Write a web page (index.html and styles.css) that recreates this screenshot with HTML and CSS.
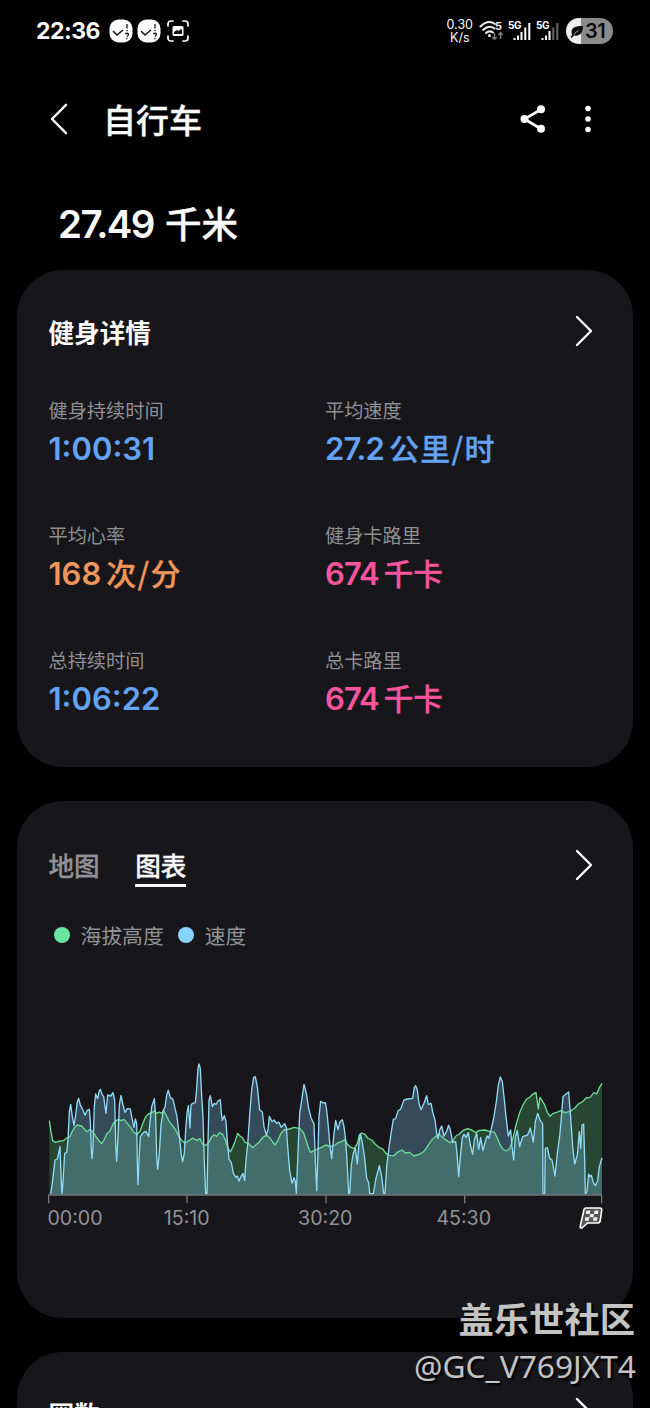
FILE: index.html
```
<!DOCTYPE html>
<html lang="zh-CN">
<head>
  <meta charset="UTF-8">
  <meta name="viewport" content="width=device-width, initial-scale=1.0">
  <title>自行车</title>
  <link rel="stylesheet" href="styles.css">
</head>
<body>
  <div class="status-bar">
    <span class="clock">22:36</span>
    <svg class="app-icon" viewBox="0 0 24 24">
      <rect x="0.5" y="0.5" width="23" height="23" rx="9" fill="#fff"/>
      <path d="M4 12l4 4 6-5" fill="none" stroke="#111" stroke-width="1.5"/>
      <path d="M18 5v4.500M18 11v1.200M16.300 15q1.800-1.500 3.200 0 .3 1.500-1.700 2.600M17.800 19v1.200" fill="none" stroke="#111" stroke-width="1.300"/>
    </svg>
    <svg class="app-icon" viewBox="0 0 24 24">
      <rect x="0.5" y="0.5" width="23" height="23" rx="9" fill="#fff"/>
      <path d="M4 12l4 4 6-5" fill="none" stroke="#111" stroke-width="1.5"/>
      <path d="M18 5v4.500M18 11v1.200M16.300 15q1.800-1.500 3.200 0 .3 1.500-1.700 2.600M17.800 19v1.200" fill="none" stroke="#111" stroke-width="1.300"/>
    </svg>
    <svg class="shot-icon" viewBox="0 0 22 22">
      <path d="M1 6V4q0-3 3-3h2M16 1h2q3 0 3 3v2M21 16v2q0 3-3 3h-2M6 21H4q-3 0-3-3v-2" fill="none" stroke="#fff" stroke-width="1.700" stroke-linecap="round"/>
      <rect x="5.500" y="6" width="11" height="10" rx="1.500" fill="#fff"/>
      <path d="M7 14v-2l3-2 1.500 1L14 9l1 1v4z" fill="#111"/>
    </svg>
    <div class="status-right">
      <span class="net-speed">0.30<br>K/s</span>
      <svg class="wifi" viewBox="0 0 26 22">
        <g fill="none" stroke="#eee" stroke-width="2.100" stroke-linecap="round">
          <path d="M1.500 6.500Q9-1 16 4"/>
          <path d="M4.200 9.800Q10 4.500 15.500 8.500"/>
          <path d="M7 13Q10.500 10 14 12.500"/>
        </g>
        <circle cx="10.500" cy="15.500" r="1.500" fill="#eee"/>
        <path d="M15.500 13v6M13.300 17l2.200 2.300 2.200-2.300M21.500 19v-6M19.300 15l2.200-2.300 2.200 2.300" fill="none" stroke="#777" stroke-width="1.600"/>
        <text x="16" y="9.500" class="wifi-num">5</text>
      </svg>
      <svg class="signal" viewBox="0 0 24 22">
        <text x="0" y="8.500" class="sig-text">5G</text>
        <path d="M6.500 18v2M10 15.500V20M13.500 12V20M17.300 7.500V20M21.300 3V20" stroke="#fff" stroke-width="2" fill="none"/>
      </svg>
      <svg class="signal" viewBox="0 0 24 22">
        <text x="0" y="8.500" class="sig-text">5G</text>
        <path d="M6.500 18v2M10 15.500V20M13.500 11V20" stroke="#fff" stroke-width="2" fill="none"/>
        <path d="M17.300 7.500V20M21.300 3V20" stroke="#666" stroke-width="2" fill="none"/>
      </svg>
      <div class="battery">
        <svg viewBox="0 0 14 14">
          <path d="M2 11Q0 5 5 3 8 1.800 13 2q0 5-2.500 8-3 2.600-6.500 1.500L1.500 14 .5 13z" fill="#0a0a0a"/>
          <path d="M3.500 10.800l5-4.800" stroke="#bbb" stroke-width="0.900"/>
        </svg>
        <span>31</span>
      </div>
    </div>
  </div>

  <header class="app-bar">
    <svg class="back" viewBox="0 0 18 32">
      <path d="M16 1.800L2 16l14 14.200" fill="none" stroke="#fff" stroke-width="2.400" stroke-linecap="round" stroke-linejoin="round"/>
    </svg>
    <h1>自行车</h1>
    <svg class="share" viewBox="0 0 26 30">
      <path d="M21 5.500L4.500 15 21 25" fill="none" stroke="#fff" stroke-width="2.700"/>
      <circle cx="4.500" cy="15" r="4" fill="#fff"/>
      <circle cx="21" cy="5.200" r="4" fill="#fff"/>
      <circle cx="21" cy="24.800" r="4" fill="#fff"/>
    </svg>
    <svg class="more" viewBox="0 0 8 30">
      <circle cx="4" cy="4.500" r="2.800" fill="#fff"/>
      <circle cx="4" cy="15" r="2.800" fill="#fff"/>
      <circle cx="4" cy="25.500" r="2.800" fill="#fff"/>
    </svg>
  </header>

  <div class="distance">27.49 <span>千米</span></div>

  <section class="card details">
    <div class="card-head">
      <h2>健身详情</h2>
      <svg class="chevron" viewBox="0 0 18 32">
        <path d="M2 2l14 14L2 30" fill="none" stroke="#fff" stroke-width="2.400" stroke-linecap="round" stroke-linejoin="round"/>
      </svg>
    </div>
    <div class="stats">
      <div class="stat blue">
        <p>健身持续时间</p>
        <strong>1:00:31</strong>
      </div>
      <div class="stat blue tight">
        <p>平均速度</p>
        <strong>27.2<span class="wide">公里/时</span></strong>
      </div>
      <div class="stat orange">
        <p>平均心率</p>
        <strong>168<span class="wide">次/分</span></strong>
      </div>
      <div class="stat pink tight">
        <p>健身卡路里</p>
        <strong>674<span>千卡</span></strong>
      </div>
      <div class="stat blue">
        <p>总持续时间</p>
        <strong>1:06:22</strong>
      </div>
      <div class="stat pink tight">
        <p>总卡路里</p>
        <strong>674<span>千卡</span></strong>
      </div>
    </div>
  </section>

  <section class="card chart-card">
    <div class="card-head">
      <div class="tabs">
        <span class="tab">地图</span>
        <span class="tab active">图表</span>
      </div>
      <svg class="chevron" viewBox="0 0 18 32">
        <path d="M2 2l14 14L2 30" fill="none" stroke="#fff" stroke-width="2.400" stroke-linecap="round" stroke-linejoin="round"/>
      </svg>
    </div>
    <div class="legend">
      <i class="dot green"></i><span>海拔高度</span>
      <i class="dot sky"></i><span>速度</span>
    </div>
    <svg class="chart" viewBox="0 0 1668 435">
      <path id="altArea" class="alt-area"/>
      <path id="speedArea" class="speed-area"/>
      <polyline id="altLine" class="alt-line"/>
      <polyline id="speedLine" class="speed-line"/>
      <path class="axis" d="M0 405H1662M2 405v25M417 405v25M834 405v25M1250 405v25M1661 405v25"/>
    </svg>
    <div class="axis-labels">
      <span>00:00</span>
      <span>15:10</span>
      <span>30:20</span>
      <span>45:30</span>
      <svg class="flag" viewBox="0 0 24 22">
        <path d="M5 2.500Q5.500 1 7 1h14q2 0 1.700 2l-1.500 11q-.4 2-2.400 2H8.500L3.500 20.500q-2.500 1.500-2.300-1z" fill="#555" stroke="#fff" stroke-width="1.600" stroke-linejoin="round"/>
        <path d="M7.300 3.500h4l-.5 3.400h-4zM15.500 3.500h4l-.5 3.400h-4zM11 6.900h4l-.5 3.400h-4zM6.300 10.300h4l-.5 3.400h-4zM14.500 10.300h4l-.5 3.400h-4z" fill="#eee"/>
      </svg>
    </div>
  </section>

  <section class="card laps">
    <div class="card-head">
      <h2>圈数</h2>
      <svg class="chevron" viewBox="0 0 18 32">
        <path d="M2 2l14 14L2 30" fill="none" stroke="#fff" stroke-width="2.400" stroke-linecap="round" stroke-linejoin="round"/>
      </svg>
    </div>
  </section>

  <div class="watermark">
    <b>盖乐世社区</b>
    <span>@GC_V769JXT4</span>
  </div>

  <script>
    const altitude = `4,182 9,215 14,242 23,247 36,243 46,242 56,234 66,230 72,216 80,202 88,195 101,198 109,207
      116,215 124,209 132,213 140,224 151,240 161,251 168,240 176,222 186,213 194,194 202,183 211,178 219,182
      228,178 238,190 248,202 256,216 267,223 276,214 284,192 292,172 301,162 312,158 319,152 326,160 334,156
      341,160 347,151 354,165 364,185 374,198 382,208 391,226 401,242 411,249 423,242 434,234 446,241 456,236
      464,253 474,256 484,245 489,234 498,224 506,229 514,218 524,223 532,240 539,262 547,276 554,262 561,245
      569,220 576,228 584,234 591,247 601,250 614,263 624,254 634,246 644,232 656,226 666,234 674,246 682,255
      691,238 699,220 708,210 724,207 739,202 756,206 766,217 774,240 781,263 788,277 798,272 808,267 821,262
      833,255 848,260 861,255 871,248 881,245 891,238 898,253 908,262 919,266 928,250 934,225 941,219 951,223
      959,234 971,240 981,252 993,262 1004,267 1014,280 1024,286 1038,287 1048,277 1061,270 1073,279 1084,277
      1098,288 1113,283 1126,276 1136,263 1144,250 1153,238 1164,229 1173,222 1182,231 1191,238 1206,248
      1216,241 1224,228 1234,222 1244,212 1258,206 1271,210 1283,218 1294,211 1311,210 1326,215 1339,216
      1348,234 1356,254 1364,267 1374,273 1384,267 1391,250 1398,220 1406,188 1416,155 1426,133 1436,117
      1446,111 1454,103 1464,97 1471,147 1476,112 1483,123 1489,133 1498,157 1506,169 1516,160 1526,157
      1538,152 1551,158 1566,154 1581,144 1591,132 1604,125 1614,114 1626,112 1638,98 1646,102 1654,83 1662,70`;

    const speed = `8,402 13,370 21,300 28,297 32,280 36,260 40,370 42,402 45,365 50,280 56,278 60,240 64,155 68,133
      73,170 78,196 83,165 88,125 92,115 97,135 104,148 111,166 117,152 124,148 127,185 130,270 132,296 135,260
      139,140 143,102 149,116 153,95 157,88 162,103 167,110 174,160 179,105 188,108 195,98 200,120 203,250
      206,304 210,230 214,135 219,106 225,135 231,157 238,146 247,147 252,175 258,203 262,177 266,190 268,310
      270,374 273,300 277,230 286,218 294,214 302,230 306,185 311,140 319,116 323,170 326,290 329,328 334,280
      339,195 346,150 351,142 356,105 361,91 367,113 375,118 381,145 387,170 394,230 400,285 404,305 409,280
      413,210 417,160 421,137 426,204 429,135 434,130 442,128 445,100 450,25 453,12 457,25 460,90 465,170
      469,310 473,401 477,401 480,250 483,120 487,107 493,140 499,130 504,133 510,123 517,119 520,160 523,181
      529,167 534,185 538,245 543,298 550,308 556,340 564,352 568,348 573,363 579,350 585,340 590,362 594,300
      599,255 605,165 611,90 617,52 622,50 628,80 635,150 643,156 648,200 655,225 660,210 664,169 672,185
      678,180 686,190 692,186 700,202 710,191 715,203 719,260 725,332 732,370 738,353 742,365 745,401 749,300
      755,160 762,115 768,73 775,100 782,145 789,173 798,192 802,300 806,392 809,310 813,170 818,124 826,129
      832,128 836,150 841,200 846,260 851,296 857,230 863,181 870,209 876,185 883,179 888,200 893,240 898,320
      902,401 905,401 910,315 916,280 922,265 928,312 933,250 937,222 943,248 950,295 956,355 962,368 965,401
      976,401 984,355 994,317 1001,350 1007,401 1011,401 1016,320 1022,270 1030,215 1036,178 1043,176 1050,153
      1058,147 1068,120 1079,117 1094,115 1099,83 1103,77 1108,90 1113,130 1119,149 1128,130 1136,107 1141,133
      1149,130 1155,160 1161,180 1166,220 1170,236 1175,210 1181,198 1188,228 1196,214 1202,196 1207,210
      1214,247 1223,245 1227,280 1232,350 1237,290 1243,232 1248,223 1254,232 1261,218 1267,255 1274,283
      1279,240 1286,220 1292,268 1298,233 1305,272 1311,248 1317,228 1323,234 1329,210 1338,170 1345,125
      1351,75 1357,51 1363,65 1369,120 1374,170 1381,228 1388,210 1392,260 1397,300 1402,230 1408,211 1415,260
      1424,230 1439,225 1447,204 1456,246 1462,185 1469,160 1476,180 1484,192 1485,401 1490,401 1492,265
      1498,263 1505,295 1512,300 1521,348 1528,280 1536,220 1541,160 1545,110 1554,102 1562,96 1567,160
      1574,260 1580,312 1588,285 1594,215 1598,265 1602,195 1607,192 1610,300 1612,401 1617,395 1622,342
      1626,350 1630,346 1636,368 1642,377 1649,362 1654,320 1662,294`;

    // area goes down to the axis, line is only the top edge
    function draw(name, points, startX) {
      document.getElementById(name + 'Line').setAttribute('points', points);
      document.getElementById(name + 'Area').setAttribute('d', `M${startX},404 L${points} L1662,404 Z`);
    }
    draw('alt', altitude, 4);
    draw('speed', speed, 8);
  </script>
</body>
</html>
```

FILE: styles.css
```
* {
  box-sizing: border-box;
}
body {
  font-family: Inter, 'Noto Sans CJK SC', sans-serif;
  background-color: #000;
  color: #fafafa;
  margin: 0;
  padding: 0 17px;
  height: 1408px;
  overflow: hidden;
  position: relative;
}
h1, h2, p {
  margin: 0;
}
svg {
  display: block;
  flex: none;
}
.status-bar {
  display: flex;
  align-items: center;
  height: 62px;
  padding: 0 20px 0 19px;
}
.clock {
  font-size: 23px;
  font-weight: 700;
  letter-spacing: -0.5px;
  width: 73px;
  white-space: nowrap;
}
.app-icon {
  width: 24px;
  height: 24px;
  margin-right: 4px;
}
.shot-icon {
  width: 22px;
  height: 22px;
  margin-left: 2px;
}
.status-right {
  display: flex;
  align-items: center;
  margin-left: auto;
}
.net-speed {
  font-size: 12.5px;
  line-height: 13.5px;
  text-align: center;
  margin-right: 6px;
}
.wifi {
  width: 26px;
  height: 22px;
  margin-right: 3px;
}
.wifi-num {
  font-size: 11px;
  font-weight: 700;
  fill: #eee;
}
.signal {
  width: 24px;
  height: 22px;
  margin-right: 4px;
}
.signal + .battery {
  margin-left: 2px;
}
.sig-text {
  font-size: 10px;
  font-weight: 700;
  letter-spacing: -0.5px;
  fill: #fff;
}
.battery {
  display: flex;
  align-items: center;
  width: 47px;
  height: 26px;
  padding-left: 4px;
  border-radius: 13px;
  background: linear-gradient(to right, #eee 15px, #8b8b8b 15px);
  color: #0a0a0a;
  font-size: 20px;
  font-weight: 600;
  letter-spacing: -0.5px;
}
.battery svg {
  width: 14px;
  height: 14px;
  margin-right: 1px;
}
.app-bar {
  display: flex;
  align-items: center;
  height: 114px;
  padding: 0 41px 0 33px;
}
.back {
  width: 18px;
  height: 32px;
  margin-right: 35px;
}
.app-bar h1 {
  font-size: 33px;
  font-weight: 500;
  line-height: 40px;
  padding-top: 4px;
  flex: 1;
  -webkit-text-stroke: 0.4px;
}
.share {
  width: 26px;
  height: 30px;
  margin-right: 38px;
}
.more {
  width: 8px;
  height: 30px;
}
.distance {
  height: 94px;
  padding: 24px 0 0 41px;
  font-size: 38.5px;
  font-weight: 600;
  line-height: 48px;
  letter-spacing: -1.6px;
  white-space: nowrap;
}
.distance span {
  font-size: 36.5px;
  font-weight: 500;
  letter-spacing: 0;
  margin-left: 3px;
  -webkit-text-stroke: 0.4px;
}
.card {
  background-color: #17171b;
  border-radius: 46px;
  padding: 40px 40px 0 31.5px;
}
.card-head {
  display: flex;
  justify-content: space-between;
  height: 44px;
}
.card-head h2 {
  font-size: 25.6px;
  font-weight: 700;
  line-height: 44px;
  padding-top: 2px;
}
.chevron {
  width: 18px;
  height: 32px;
  margin-top: 5px;
}
.details {
  height: 497px;
}
.stats {
  display: grid;
  grid-template-columns: 276.5px 1fr;
  grid-auto-rows: 125px;
  margin-top: 43px;
}
.stat p {
  font-size: 19.2px;
  line-height: 28px;
  color: #8f8f93;
}
.stat strong {
  display: block;
  font-size: 31px;
  font-weight: 600;
  line-height: 47px;
  white-space: nowrap;
}
.stat strong span {
  font-family: 'Noto Sans CJK SC', sans-serif;
  font-size: 29.5px;
  font-weight: 500;
  line-height: 1;
  letter-spacing: 0;
  margin-left: 5px;
  -webkit-text-stroke: 0.3px;
}
.stat strong .wide {
  font-size: 30px;
  letter-spacing: 1.3px;
}
.tight strong {
  letter-spacing: -0.9px;
}
.blue strong {
  color: #64a2f4;
}
.orange strong {
  color: #f0965a;
}
.pink strong {
  color: #f8559d;
}
.chart-card {
  height: 517px;
  margin-top: 34px;
  padding-right: 30px;
}
.chart-card .chevron {
  margin-top: 8px;
  margin-right: 10px;
}
.tabs {
  display: flex;
  gap: 35.5px;
}
.tab {
  font-size: 25.6px;
  font-weight: 500;
  line-height: 40px;
  height: 46px;
  padding-top: 6px;
  color: #929296;
  -webkit-text-stroke: 0.3px;
}
.tab.active {
  color: #fafafa;
  border-bottom: 3px solid #fafafa;
}
.legend {
  display: flex;
  align-items: center;
  height: 30px;
  margin-top: 35px;
  padding-left: 5px;
  font-size: 20.8px;
  color: #929296;
}
.dot {
  width: 16px;
  height: 16px;
  border-radius: 50%;
  margin-right: 11px;
}
.green {
  background-color: #68e5a2;
}
.sky {
  background-color: #86d3fd;
  margin-left: 14px;
}
.chart {
  width: 556px;
  height: 145px;
  margin: 110px 0 0 -0.5px;
}
.alt-area {
  fill: rgba(95, 225, 130, 0.24);
}
.speed-area {
  fill: rgba(130, 205, 245, 0.29);
}
.alt-line, .speed-line {
  fill: none;
  stroke: #6cdb95;
  stroke-width: 4;
  stroke-linejoin: round;
}
.speed-line {
  stroke: #92d9f6;
}
.axis {
  fill: none;
  stroke: #77777a;
  stroke-width: 4;
}
/* middle labels are centred under their ticks */
.axis-labels {
  display: grid;
  grid-template-columns: 69px repeat(3, 138.5px) 1fr;
  align-items: center;
  justify-items: center;
  height: 26px;
  font-size: 19.6px;
  color: #929296;
}
.axis-labels span:first-child {
  justify-self: start;
  margin-left: -1px;
}
.flag {
  width: 24px;
  height: 22px;
  justify-self: end;
}
.laps {
  height: 56px;
  margin-top: 34px;
  border-radius: 46px 46px 0 0;
  overflow: hidden;
}
.watermark {
  position: absolute;
  right: 14px;
  bottom: 17px;
  display: flex;
  flex-direction: column;
  align-items: flex-end;
  color: #c3c3c3;
  text-shadow: 2px 2px 2px #000;
}
.watermark b {
  font-size: 35.3px;
  line-height: 40px;
  margin-right: 1px;
}
.watermark span {
  font-family: 'Noto Sans', sans-serif;
  font-size: 31.7px;
  line-height: 50px;
}
```
